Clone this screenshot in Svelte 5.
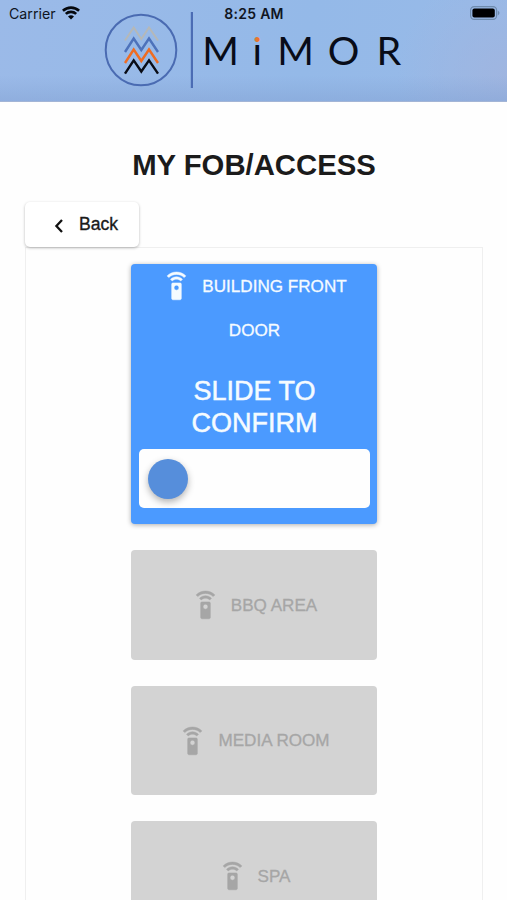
<!-- Fob / access screen: pick a door and slide to unlock it -->
<script>
  //Door currently waiting for confirmation
  let activeFob = "Building Front Door";

  //Remaining doors, disabled while one is active
  let fobs = ["BBQ Area", "Media Room", "Spa"];
</script>

{#snippet remoteIcon()}
  <svg class="remote" viewBox="0 0 24 24">
    <path d="M15 9H9c-.55 0-1 .45-1 1v12c0 .55.45 1 1 1h6c.55 0 1-.45 1-1V10c0-.55-.45-1-1-1zm-3 6c-1.1 0-2-.9-2-2s.9-2 2-2 2 .9 2 2-.9 2-2 2zM7.05 6.05l1.41 1.41C9.37 6.56 10.62 6 12 6s2.63.56 3.54 1.46l1.41-1.41C15.68 4.78 13.93 4 12 4s-3.68.78-4.95 2.05zM12 0C8.96 0 6.21 1.23 4.22 3.22l1.41 1.41C7.26 3.01 9.51 2 12 2s4.74 1.01 6.36 2.64l1.41-1.41C17.79 1.23 15.04 0 12 0z" />
  </svg>
{/snippet}

<div class="screen">
  <header class="header">
    <!-- Phone status bar -->
    <div class="status">
      <div class="carrier">
        <span>Carrier</span>
        <svg class="wifi" viewBox="0 0 18 14">
          <path d="M0.9 4.8a11.8 11.8 0 0 1 16.2 0" />
          <path d="M3.8 7.9a7.6 7.6 0 0 1 10.4 0" />
          <path class="wifi-dot" d="M9 13.6l-3-3a4.3 4.3 0 0 1 6 0z" />
        </svg>
      </div>
      <span class="time">8:25 AM</span>
      <svg class="battery" viewBox="0 0 30 14">
        <rect class="shell" x="0.6" y="0.6" width="26" height="12.8" rx="3.6" />
        <rect x="2.4" y="2.4" width="22.4" height="9.2" rx="2" />
        <path class="tip" d="M27.8 4.6q3.4 2.4 0 4.8z" />
      </svg>
    </div>

    <!-- Brand logo -->
    <svg class="logo" viewBox="0 0 304 78">
      <defs>
        <!-- Orange dot over a dark stem -->
        <linearGradient id="dot-fill" gradientUnits="userSpaceOnUse" x1="0" y1="0" x2="0" y2="78">
          <stop offset="0.405" stop-color="#e8762f" />
          <stop offset="0.405" stop-color="#080c18" />
        </linearGradient>
      </defs>
      <circle class="ring" cx="38" cy="40" r="35.3" />
      <path class="peak sand" d="M22 30.5L30.7 17.5L38.3 29L46 17.5L55 30.5" />
      <path class="peak blue" d="M22 42L30.7 28.5L38.3 40L46 28.5L55 42" />
      <path class="peak orange" d="M22 53L30.7 39.5L38.3 51L46 39.5L55 53" />
      <path class="peak black" d="M22 63.7L30.7 50.3L38.3 61.5L46 50.3L55 63.7" />
      <path class="divider" d="M88.9 2V78" />
      <text class="brand" x="99.2 149.5 174.2 224.8 273.4" y="54.5">M<tspan fill="url(#dot-fill)">i</tspan>MOR</text>
    </svg>
  </header>

  <main>
    <h1>MY FOB/ACCESS</h1>

    <button class="back">
      <svg viewBox="0 0 10 16"><path d="M8 2L2.4 8L8 14" /></svg>
      <span>Back</span>
    </button>

    <div class="fobs">
      <section class="fob active">
        <p class="label">{@render remoteIcon()}{activeFob}</p>
        <h2>Slide to confirm</h2>
        <div class="slider">
          <div class="knob"></div>
        </div>
      </section>

      {#each fobs as fob}
        <section class="fob disabled">
          <p class="label">{@render remoteIcon()}{fob}</p>
        </section>
      {/each}
    </div>
  </main>
</div>

<style>
  :global(body) {
    margin: 0;
    background: #fff;
  }

  .screen {
    height: 900px;
    overflow: hidden;
    background: #fefefe;
    color: #1b1b1b;
    font-family: "Liberation Sans", Arial, sans-serif;
  }

  .header {
    box-sizing: border-box;
    height: 101.5px;
    border-bottom: 1px solid #a3b5d6;
    background:
      linear-gradient(to bottom, rgba(130, 160, 210, 0) 75%, rgba(130, 160, 210, 0.45)),
      radial-gradient(circle at 100% 75%, #9fb5e0, rgba(159, 181, 224, 0) 110px),
      linear-gradient(100deg, #9bbae8, #94b9e8 60%, #98bae8);
  }

  .status {
    display: grid;
    grid-template-columns: 1fr auto 1fr;
    align-items: center;
    height: 12px;
    padding: 8px 7px 0 9px;
    color: #10151f;
    font-family: Inter, sans-serif;
    font-size: 14.2px;
    line-height: 12px;
  }

  .carrier {
    display: flex;
    align-items: center;
    gap: 6px;
  }

  .wifi {
    width: 18px;
    height: 14px;
    margin-top: -3px;
    fill: none;
    stroke: #05080d;
    stroke-width: 2.6;
  }

  .wifi-dot {
    fill: #05080d;
    stroke: none;
  }

  .time {
    margin-right: 1px;
    font-weight: 600;
    font-size: 14px;
    letter-spacing: 0.3px;
  }

  .battery {
    justify-self: end;
    width: 30px;
    height: 14px;
    margin-top: -2px;
  }

  .shell {
    fill: none;
    stroke: #6e8bad;
    stroke-width: 1.2;
  }

  .tip {
    fill: #6e8bad;
  }

  .logo {
    display: block;
    width: 304px;
    height: 78px;
    margin: -10px 0 0 103px;
    fill: none;
  }

  .ring {
    stroke: #4a6bb2;
    stroke-width: 2;
  }

  .peak {
    stroke-width: 2.4;
  }

  .sand {
    stroke: #b5b8b8;
    stroke-width: 2;
  }

  .blue {
    stroke: #4d72bb;
  }

  .orange {
    stroke: #ef6c22;
  }

  .black {
    stroke: #090c16;
  }

  .divider {
    stroke: #4b6cb4;
    stroke-width: 2.2;
  }

  .brand {
    fill: #080c18;
    font-family: Lato, sans-serif;
    font-size: 39.5px;
  }

  main {
    padding: 0 24px 0 25px;
  }

  h1 {
    margin: 47px 0 20px;
    font-size: 29.3px;
    line-height: 32px;
    text-align: center;
  }

  .back {
    position: relative;
    display: flex;
    align-items: center;
    gap: 15px;
    box-sizing: border-box;
    width: 114px;
    height: 45px;
    margin-top: 21px;
    padding: 1px 0 0 29px;
    border: 0;
    border-radius: 5px;
    background: #fff;
    box-shadow: 0 1px 3px rgba(0, 0, 0, 0.28);
    color: #1b1b1b;
    font-family: inherit;
    font-size: 17.6px;
    -webkit-text-stroke: 0.35px;
  }

  .back svg {
    width: 10px;
    height: 16px;
    margin-top: 2px;
    fill: none;
    stroke: #111;
    stroke-width: 2.3;
  }

  .fobs {
    display: flex;
    flex-direction: column;
    align-items: center;
    gap: 25.9px;
    height: 700px;
    padding-top: 16.8px;
    border: 1px solid #efefef;
  }

  .fob {
    flex: none;
    box-sizing: border-box;
    width: 246px;
    border-radius: 4px;
    text-transform: uppercase;
    text-align: center;
  }

  .label {
    margin: 0;
    font-size: 17.1px;
    line-height: 44px;
    -webkit-text-stroke: 0.3px;
  }

  .remote {
    width: 29px;
    height: 29px;
    margin-right: 11px;
    fill: currentColor;
    stroke: currentColor;
    stroke-width: 0.4;
    overflow: visible;
    vertical-align: -9.5px;
  }

  .active {
    height: 260px;
    padding: 0.4px 7px 0 8px;
    background: #4b9aff;
    box-shadow: 0 1px 5px rgba(0, 0, 0, 0.32);
    color: #f5fbff;
  }

  .active .label {
    padding: 0 15px;
  }

  .active h2 {
    margin: 22px 40px 10.6px;
    font-size: 27px;
    font-weight: 400;
    line-height: 32px;
    -webkit-text-stroke: 0.5px;
  }

  .slider {
    display: flex;
    align-items: center;
    box-sizing: border-box;
    height: 59px;
    padding-left: 9px;
    border-radius: 5px;
    background: #fefefe;
  }

  .knob {
    width: 40px;
    height: 40px;
    border-radius: 50%;
    background: #568edb;
    box-shadow: 0 3px 7px rgba(0, 0, 0, 0.3);
  }

  .disabled {
    height: 109.7px;
    padding-top: 33.5px;
    background: #d3d3d3;
    color: #a6a6a6;
  }
</style>
